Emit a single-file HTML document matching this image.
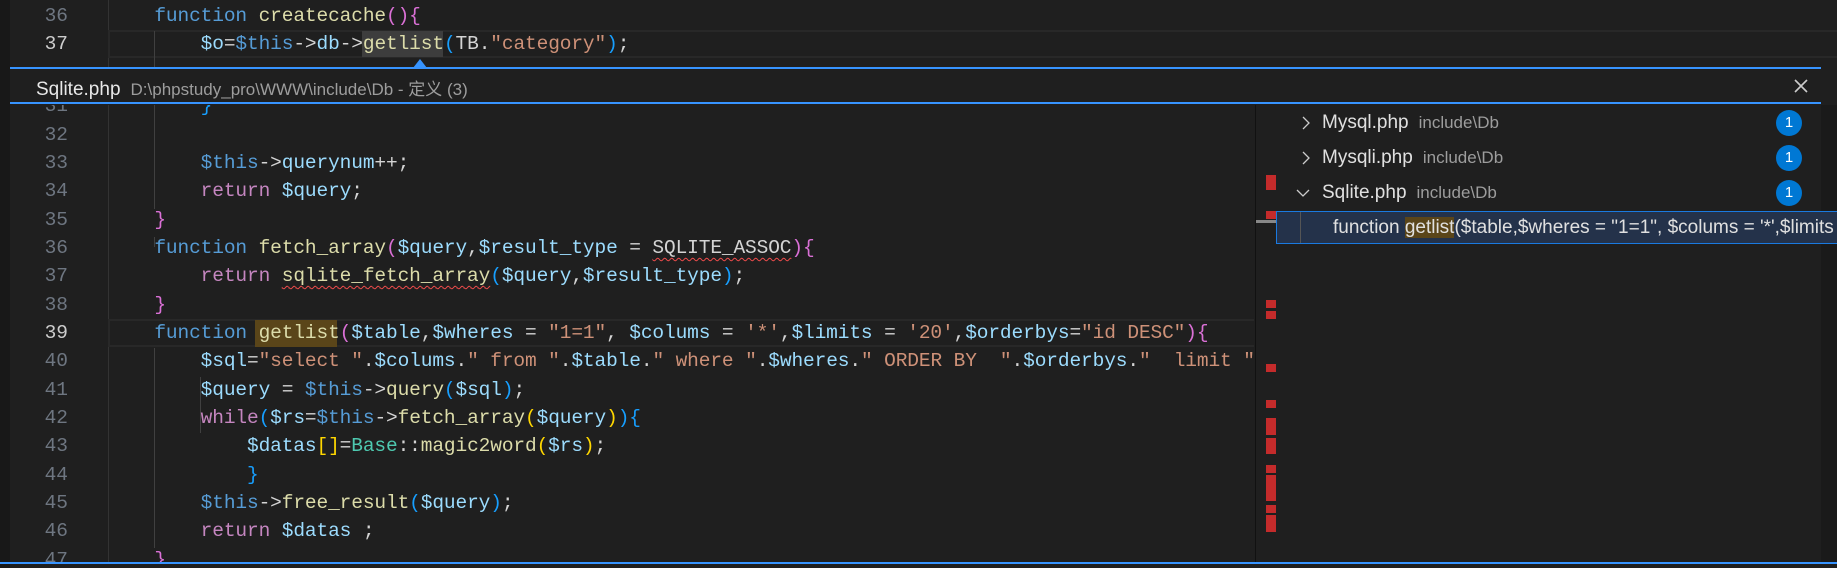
<!DOCTYPE html>
<html><head><meta charset="utf-8"><style>
*{margin:0;padding:0;box-sizing:border-box}
body{width:1837px;height:568px;background:#1f1f1f;overflow:hidden;position:relative;font-family:"Liberation Mono",monospace}
.ln{position:absolute;left:0;width:68px;text-align:right;font-size:19.5px;color:#6e7681;height:28.3px;line-height:28.3px}
.cl{position:absolute;left:108px;font-size:19.5px;letter-spacing:-0.12px;height:28.3px;line-height:28.3px;white-space:pre;color:#d4d4d4}
.k{color:#569cd6}.c{color:#c586c0}.v{color:#9cdcfe}.f{color:#dcdcaa}.s{color:#ce9178}.t{color:#4ec9b0}
.g{color:#ffd700}.p{color:#da70d6}.b{color:#179fff}
.sq{text-decoration:underline wavy #f14c4c;text-decoration-thickness:1px;text-underline-offset:4px}
.guide{position:absolute;width:1px;background:#404040}
.sans{font-family:"Liberation Sans","Noto Sans CJK SC",sans-serif}
.red{position:absolute;left:1266px;width:10px;background:#c42b2b}
.row{position:absolute;left:1276px;width:561px;height:32px;line-height:32px;font-size:19px;color:#e0e0e0}
.badge{position:absolute;left:1776px;width:26px;height:26px;border-radius:13px;background:#0078d4;color:#fff;font-size:15px;text-align:center;line-height:26px}
</style></head><body>
<div style="position:absolute;left:0;top:0;width:10px;height:568px;background:#181818"></div>
<div style="position:absolute;left:108px;top:0;width:1px;height:68px;background:#333"></div>
<div style="position:absolute;left:108px;top:30px;width:1729px;height:28px;border:2px solid #282828;border-right:none"></div>
<div class="ln" style="top:2px">36</div>
<div class="cl" style="top:2px">    <span class="k">function</span> <span class="f">createcache</span><span class="p">(){</span></div>
<div class="ln" style="top:30px;color:#ccc">37</div>
<div class="guide" style="left:154px;top:31px;height:37px"></div>
<div style="position:absolute;left:362px;top:31px;width:81px;height:26px;background:#3d3d3d"></div>
<div class="cl" style="top:30px">        <span class="v">$o</span>=<span class="k">$this</span>-&gt;<span class="v">db</span>-&gt;<span class="f">getlist</span><span class="b">(</span>TB.<span class="s">"category"</span><span class="b">)</span>;</div>
<div style="position:absolute;left:413px;top:59px;width:0;height:0;border-left:7px solid transparent;border-right:7px solid transparent;border-bottom:9px solid #3794ff"></div>
<div style="position:absolute;left:10px;top:67px;width:1811px;height:37px;background:#1f1f1f;border-top:2px solid #3794ff;border-bottom:2px solid #3794ff"></div>
<div class="sans" style="position:absolute;left:36px;top:75px;font-size:19px;color:#e8e8e8">Sqlite.php <span style="font-size:17px;color:#9d9d9d">&nbsp;D:\phpstudy_pro\WWW\include\Db - 定义 (3)</span></div>
<svg style="position:absolute;left:1794px;top:79px" width="14" height="14"><path d="M1 1L13 13M13 1L1 13" stroke="#cccccc" stroke-width="1.6"/></svg>
<div style="position:absolute;left:10px;top:105px;width:1811px;height:457px;overflow:hidden">
<div style="position:absolute;left:-10px;top:0;width:1837px;height:457px">
<div style="position:absolute;left:0;top:34px;width:10px;height:34px;background:#333"></div>
<div style="position:absolute;left:108px;top:0;width:1px;height:457px;background:#333"></div>
<div style="position:absolute;left:108px;top:214px;width:1158px;height:28px;border:2px solid #282828;border-right:none"></div>
<div class="guide" style="left:154px;top:0;height:104px"></div>
<div class="guide" style="left:154px;top:132px;height:10px"></div>
<div class="guide" style="left:154px;top:243px;height:200px"></div>
<div class="guide" style="left:200px;top:272px;height:56px"></div>
<div style="position:absolute;left:255px;top:215px;width:82px;height:27px;background:#5a4519"></div>
<div class="ln" style="top:-13px">31</div><div class="cl" style="top:-13px">        <span class="b">}</span></div>
<div class="ln" style="top:16px">32</div>
<div class="ln" style="top:44px">33</div><div class="cl" style="top:44px">        <span class="k">$this</span>-&gt;<span class="v">querynum</span>++;</div>
<div class="ln" style="top:72px">34</div><div class="cl" style="top:72px">        <span class="c">return</span> <span class="v">$query</span>;</div>
<div class="ln" style="top:101px">35</div><div class="cl" style="top:101px">    <span class="p">}</span></div>
<div class="ln" style="top:129px">36</div><div class="cl" style="top:129px">    <span class="k">function</span> <span class="f">fetch_array</span><span class="p">(</span><span class="v">$query</span>,<span class="v">$result_type</span> = <span class="sq">SQLITE_ASSOC</span><span class="p">){</span></div>
<div class="ln" style="top:157px">37</div><div class="cl" style="top:157px">        <span class="c">return</span> <span class="f sq">sqlite_fetch_array</span><span class="b">(</span><span class="v">$query</span>,<span class="v">$result_type</span><span class="b">)</span>;</div>
<div class="ln" style="top:186px">38</div><div class="cl" style="top:186px">    <span class="p">}</span></div>
<div class="ln" style="top:214px;color:#ccc">39</div><div class="cl" style="top:214px">    <span class="k">function</span> <span class="f">getlist</span><span class="p">(</span><span class="v">$table</span>,<span class="v">$wheres</span> = <span class="s">"1=1"</span>, <span class="v">$colums</span> = <span class="s">'*'</span>,<span class="v">$limits</span> = <span class="s">'20'</span>,<span class="v">$orderbys</span>=<span class="s">"id DESC"</span><span class="p">){</span></div>
<div class="ln" style="top:242px">40</div><div class="cl" style="top:242px">        <span class="v">$sql</span>=<span class="s">"select "</span>.<span class="v">$colums</span>.<span class="s">" from "</span>.<span class="v">$table</span>.<span class="s">" where "</span>.<span class="v">$wheres</span>.<span class="s">" ORDER BY  "</span>.<span class="v">$orderbys</span>.<span class="s">"  limit "</span>.<span class="v">$</span></div>
<div class="ln" style="top:271px">41</div><div class="cl" style="top:271px">        <span class="v">$query</span> = <span class="k">$this</span>-&gt;<span class="f">query</span><span class="b">(</span><span class="v">$sql</span><span class="b">)</span>;</div>
<div class="ln" style="top:299px">42</div><div class="cl" style="top:299px">        <span class="c">while</span><span class="b">(</span><span class="v">$rs</span>=<span class="k">$this</span>-&gt;<span class="f">fetch_array</span><span class="g">(</span><span class="v">$query</span><span class="g">)</span><span class="b">){</span></div>
<div class="ln" style="top:327px">43</div><div class="cl" style="top:327px">            <span class="v">$datas</span><span class="g">[]</span>=<span class="t">Base</span>::<span class="f">magic2word</span><span class="g">(</span><span class="v">$rs</span><span class="g">)</span>;</div>
<div class="ln" style="top:356px">44</div><div class="cl" style="top:356px">            <span class="b">}</span></div>
<div class="ln" style="top:384px">45</div><div class="cl" style="top:384px">        <span class="k">$this</span>-&gt;<span class="f">free_result</span><span class="b">(</span><span class="v">$query</span><span class="b">)</span>;</div>
<div class="ln" style="top:412px">46</div><div class="cl" style="top:412px">        <span class="c">return</span> <span class="v">$datas</span> ;</div>
<div class="ln" style="top:441px">47</div><div class="cl" style="top:441px">    <span class="p">}</span></div>
</div></div>
<div style="position:absolute;left:1254px;top:105px;width:583px;height:457px;background:#1f1f1f"></div>
<div style="position:absolute;left:1255px;top:105px;width:1px;height:457px;background:#111"></div>
<div class="red" style="top:175px;height:15px"></div>
<div class="red" style="top:211px;height:8px"></div>
<div style="position:absolute;left:1256px;top:220px;width:20px;height:3px;background:#888"></div>
<div class="red" style="top:300px;height:8px"></div>
<div class="red" style="top:311px;height:8px"></div>
<div class="red" style="top:364px;height:8px"></div>
<div class="red" style="top:400px;height:8px"></div>
<div class="red" style="top:418px;height:17px"></div>
<div class="red" style="top:438px;height:16px"></div>
<div class="red" style="top:465px;height:8px"></div>
<div class="red" style="top:475px;height:26px"></div>
<div class="red" style="top:505px;height:8px"></div>
<div class="red" style="top:515px;height:17px"></div>
<div style="position:absolute;left:1821px;top:105px;width:16px;height:457px;background:#1a1a1a"></div>
<div class="row sans" style="top:107px"><svg style="position:absolute;left:24px;top:9px" width="12" height="14"><path d="M3 1L9 7L3 13" stroke="#ccc" fill="none" stroke-width="1.3"/></svg><span style="position:absolute;left:46px">Mysql.php <span style="color:#9d9d9d;font-size:17px">&nbsp;include\Db</span></span></div>
<div class="badge sans" style="top:110px">1</div>
<div class="row sans" style="top:142px"><svg style="position:absolute;left:24px;top:9px" width="12" height="14"><path d="M3 1L9 7L3 13" stroke="#ccc" fill="none" stroke-width="1.3"/></svg><span style="position:absolute;left:46px">Mysqli.php <span style="color:#9d9d9d;font-size:17px">&nbsp;include\Db</span></span></div>
<div class="badge sans" style="top:145px">1</div>
<div class="row sans" style="top:177px"><svg style="position:absolute;left:20px;top:10px" width="16" height="12"><path d="M1 3L7 9L13 3" stroke="#ccc" fill="none" stroke-width="1.3"/></svg><span style="position:absolute;left:46px">Sqlite.php <span style="color:#9d9d9d;font-size:17px">&nbsp;include\Db</span></span></div>
<div class="badge sans" style="top:180px">1</div>
<div class="row sans" style="top:211px;height:33px;background:#24324a;border:1px solid #1a7ae0;border-right:none;overflow:hidden;white-space:pre"><div style="position:absolute;left:23px;top:0;width:1px;height:33px;background:#555"></div><span style="position:absolute;left:56px">function <span style="background:#5a4519">getlist</span>($table,$wheres = "1=1", $colums = '*',$limits = '20'</span></div>
<div style="position:absolute;left:0;top:562px;width:1837px;height:2px;background:#3794ff"></div>
</body></html>
